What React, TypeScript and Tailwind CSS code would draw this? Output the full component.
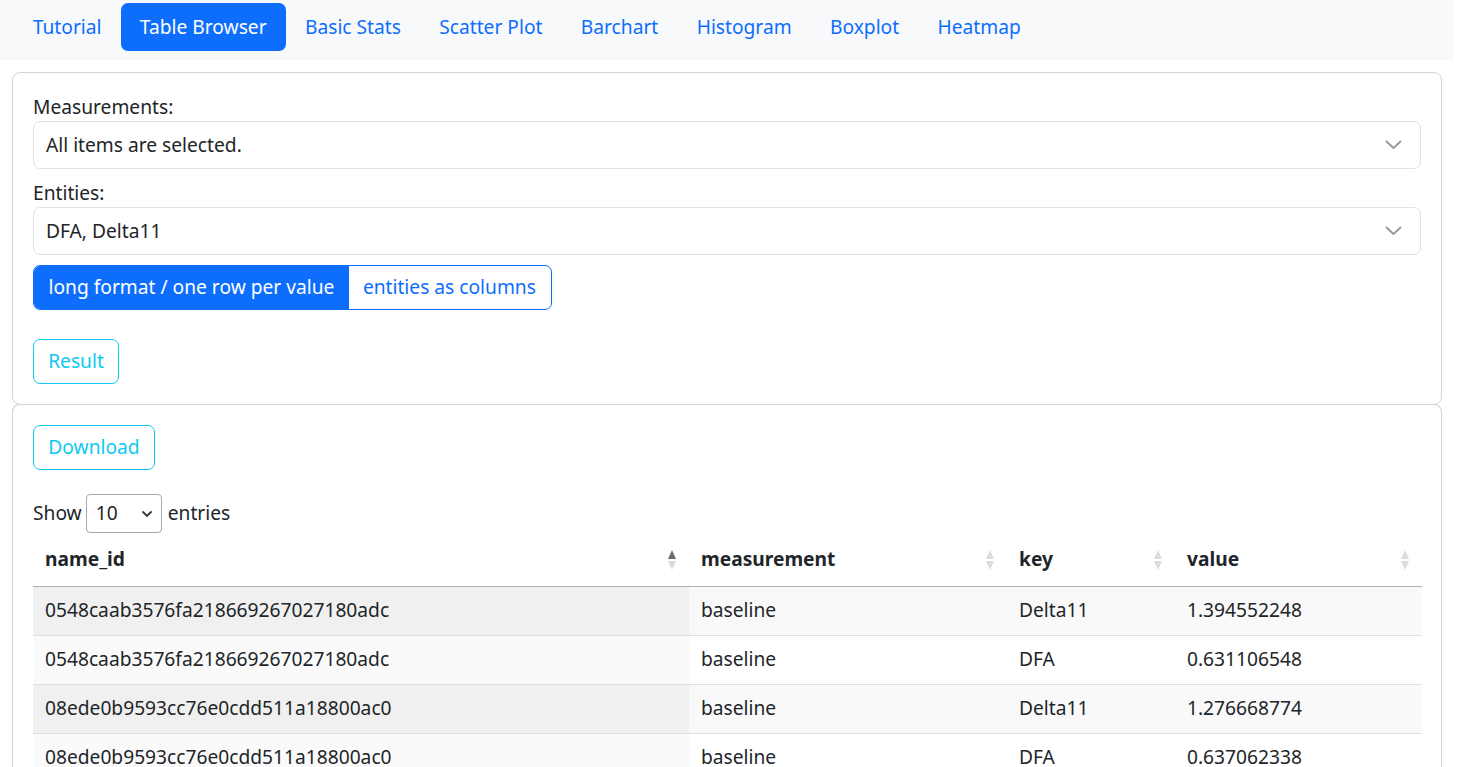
const tabs = [
  "Tutorial",
  "Table Browser",
  "Basic Stats",
  "Scatter Plot",
  "Barchart",
  "Histogram",
  "Boxplot",
  "Heatmap",
]

const rows = [
  ["0548caab3576fa218669267027180adc", "baseline", "Delta11", "1.394552248"],
  ["0548caab3576fa218669267027180adc", "baseline", "DFA", "0.631106548"],
  ["08ede0b9593cc76e0cdd511a18800ac0", "baseline", "Delta11", "1.276668774"],
  ["08ede0b9593cc76e0cdd511a18800ac0", "baseline", "DFA", "0.637062338"],
]

function SortIcon({ active }: { active?: boolean }) {
  return (
    <svg width="10" height="22" viewBox="0 0 10 22" className="shrink-0">
      <polygon points="5,1 9,10 1,10" fill={active ? "#6c6c6c" : "#dcdcdc"} />
      <polygon points="1,12 9,12 5,21" fill="#dcdcdc" />
    </svg>
  )
}

function Chevron() {
  return (
    <svg width="17" height="10" viewBox="0 0 17 10" className="shrink-0">
      <polyline
        points="1.5,1.5 8.5,8 15.5,1.5"
        fill="none"
        stroke="#9a9a9a"
        strokeWidth="2"
        strokeLinecap="round"
        strokeLinejoin="round"
      />
    </svg>
  )
}

function Select({ value }: { value: string }) {
  return (
    <div className="flex h-[48px] items-center justify-between rounded-[7px] border border-[#dee2e6] bg-white pl-[12px] pr-[18px]">
      <span>{value}</span>
      <Chevron />
    </div>
  )
}

export default function App() {
  return (
    <div
      className="min-h-screen bg-white text-[19.2px] leading-[28.8px] text-[#212529]"
      style={{ fontFamily: '"Noto Sans", "Open Sans", sans-serif' }}
    >
      <nav className="flex h-[60px] w-[1454px] items-start bg-[#f8f9fa] pl-[13.6px] pt-[3px]">
        {tabs.map((t) =>
          t === "Table Browser" ? (
            <span
              key={t}
              className="flex h-[48px] items-center rounded-[7px] bg-[#0d6efd] px-[19.2px] text-white"
            >
              {t}
            </span>
          ) : (
            <span key={t} className="flex h-[48px] items-center px-[19.2px] text-[#0d6efd]">
              {t}
            </span>
          )
        )}
      </nav>

      <div className="ml-[12px] mt-[12px] w-[1430px]">
        <div className="h-[333px] rounded-[8px] border border-[#d3d3d3] px-[20px] pt-[20px]">
          <div className="h-[28px]">Measurements:</div>
          <Select value="All items are selected." />
          <div className="mt-[10px] h-[28px]">Entities:</div>
          <Select value="DFA, Delta11" />
          <div className="mt-[10px] flex h-[45px] w-[519px] overflow-hidden rounded-[7px] border border-[#0d6efd]">
            <span className="flex items-center bg-[#0d6efd] px-[14.5px] text-white">
              long format / one row per value
            </span>
            <span className="flex items-center px-[14px] text-[#0d6efd]">
              entities as columns
            </span>
          </div>
          <div className="mt-[29px] flex h-[45px] w-[86px] items-center justify-center rounded-[7px] border border-[#0dcaf0] text-[#0dcaf0]">
            Result
          </div>
        </div>

        <div className="-mt-px h-[400px] rounded-t-[8px] border border-b-0 border-[#d3d3d3] px-[20px] pt-[20px]">
          <div className="flex h-[45px] w-[122px] items-center justify-center rounded-[7px] border border-[#0dcaf0] text-[#0dcaf0]">
            Download
          </div>
          <div className="mt-[24px] flex h-[39px] items-center">
            <span>Show</span>
            <div className="ml-[4px] mr-[6px] flex h-[39px] w-[76px] items-center justify-between rounded-[4px] border border-[#a9a9a9] pl-[9px] pr-[8px]">
              <span>10</span>
              <svg width="12" height="8" viewBox="0 0 12 8">
                <polyline
                  points="2,2 6,6 10,2"
                  fill="none"
                  stroke="#333"
                  strokeWidth="1.8"
                  strokeLinecap="round"
                />
              </svg>
            </div>
            <span>entries</span>
          </div>

          <table className="mt-[3px] w-[1389px] border-collapse text-left">
            <colgroup>
              <col className="w-[656px]" />
              <col className="w-[318px]" />
              <col className="w-[168px]" />
              <col className="w-[247px]" />
            </colgroup>
            <thead>
              <tr className="h-[50px] border-b border-[#b1b1b1]">
                {["name_id", "measurement", "key", "value"].map((h, i) => (
                  <th key={h} className="px-[12px] pb-[2px] font-bold">
                    <div className="flex items-center justify-between">
                      <span>{h}</span>
                      <SortIcon active={i === 0} />
                    </div>
                  </th>
                ))}
              </tr>
            </thead>
            <tbody>
              {rows.map((r, i) => {
                const odd = i % 2 === 0
                return (
                  <tr
                    key={i}
                    className={`h-[49px] border-b border-[#dedede] ${odd ? "bg-[#f9f9f9]" : "bg-white"}`}
                  >
                    <td className={`px-[12px] ${odd ? "bg-[#f0f0f0]" : "bg-[#fafafa]"}`}>
                      {r[0]}
                    </td>
                    <td className="px-[12px]">{r[1]}</td>
                    <td className="px-[12px]">{r[2]}</td>
                    <td className="px-[12px]">{r[3]}</td>
                  </tr>
                )
              })}
            </tbody>
          </table>
        </div>
      </div>
    </div>
  )
}
